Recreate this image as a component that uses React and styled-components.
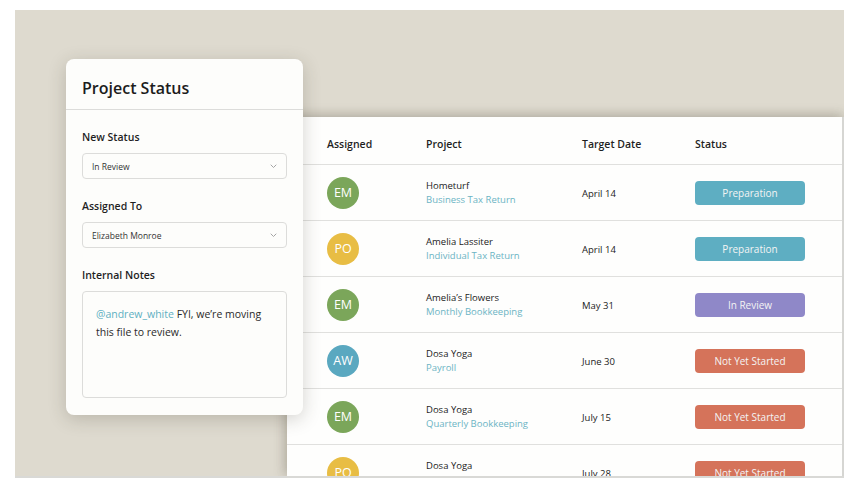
import React from "react";
import styled, { createGlobalStyle } from "styled-components";

const GlobalStyle = createGlobalStyle`
  body {
    margin: 0;
    background: #ffffff;
    font-family: "Open Sans", "Liberation Sans", sans-serif;
    color: #222;
  }
`;

const rows = [
  { initials: "EM", tone: "green", client: "Hometurf", project: "Business Tax Return", date: "April 14", status: "Preparation" },
  { initials: "PO", tone: "yellow", client: "Amelia Lassiter", project: "Individual Tax Return", date: "April 14", status: "Preparation" },
  { initials: "EM", tone: "green", client: "Amelia’s Flowers", project: "Monthly Bookkeeping", date: "May 31", status: "In Review" },
  { initials: "AW", tone: "blue", client: "Dosa Yoga", project: "Payroll", date: "June 30", status: "Not Yet Started" },
  { initials: "EM", tone: "green", client: "Dosa Yoga", project: "Quarterly Bookkeeping", date: "July 15", status: "Not Yet Started" },
  { initials: "PO", tone: "yellow", client: "Dosa Yoga", project: "Annual Report", date: "July 28", status: "Not Yet Started" },
];

const avatarColors = {
  green: "#7ba65a",
  yellow: "#e8bd44",
  blue: "#5aa8c0",
};

const badgeColors = {
  Preparation: "#5eaec2",
  "In Review": "#8f88c8",
  "Not Yet Started": "#d5735a",
};

// small grey caret used inside the selects
function Chevron() {
  return (
    <svg width="7" height="5" viewBox="0 0 7 5" fill="none">
      <path d="M1 1l2.5 2.5L6 1" stroke="#a5a5a5" strokeWidth="1" strokeLinecap="round" />
    </svg>
  );
}

export default function App() {
  return (
    <>
      <GlobalStyle />
      <Frame>
        <TablePanel>
          <HeaderRow>
            <HeadCell>Assigned</HeadCell>
            <HeadCell>Project</HeadCell>
            <HeadCell>Target Date</HeadCell>
            <HeadCell>Status</HeadCell>
          </HeaderRow>
          {rows.map((r, i) => (
            <Row key={i}>
              <Avatar $tone={r.tone}>{r.initials}</Avatar>
              <ProjectCell>
                <Client>{r.client}</Client>
                <SubLink>{r.project}</SubLink>
              </ProjectCell>
              <DateCell>{r.date}</DateCell>
              <Badge $status={r.status}>{r.status}</Badge>
            </Row>
          ))}
        </TablePanel>

        <Card>
          <CardTitle>Project Status</CardTitle>
          <CardBody>
            <Label>New Status</Label>
            <Select>
              In Review
              <Chevron />
            </Select>
            <Label>Assigned To</Label>
            <Select>
              Elizabeth Monroe
              <Chevron />
            </Select>
            <Label>Internal Notes</Label>
            <Notes>
              <Mention>@andrew_white</Mention> FYI, we’re moving this file to review.
            </Notes>
          </CardBody>
        </Card>
      </Frame>
    </>
  );
}

const Frame = styled.div`
  position: relative;
  margin: 10px 0 0 15px;
  width: 829px;
  height: 468px;
  background: #dedacf;
  padding: 107px 0 0 272px;
  box-sizing: border-box;
  overflow: hidden;
  border-bottom: 2px solid #d9d9d6;
`;

const TablePanel = styled.div`
  height: 100%;
  background: #fefefd;
  border-right: 2px solid #d6d6d3;
  box-shadow: 0 -3px 10px rgba(90, 85, 70, 0.22), -4px 0 10px rgba(90, 85, 70, 0.18);
  overflow: hidden;
`;

const grid = `
  display: grid;
  grid-template-columns: 99px 156px 113px 1fr;
  align-items: center;
  padding-left: 40px;
`;

const HeaderRow = styled.div`
  ${grid}
  height: 48px;
  padding-top: 6px;
  box-sizing: border-box;
  border-bottom: 1px solid #e0e0de;
`;

const HeadCell = styled.div`
  font-size: 10.5px;
  font-weight: 600;
  color: #1f1f1f;
`;

const Row = styled.div`
  ${grid}
  height: 56px;
  box-sizing: border-box;
  border-bottom: 1px solid #e0e0de;
`;

const Avatar = styled.div`
  width: 32px;
  height: 32px;
  border-radius: 50%;
  background: ${(p) => avatarColors[p.$tone]};
  color: #fff;
  display: flex;
  align-items: center;
  justify-content: center;
  font-size: 12.5px;
  font-weight: 400;
`;

const ProjectCell = styled.div`
  display: flex;
  flex-direction: column;
`;

const Client = styled.div`
  font-size: 9.5px;
  line-height: 14px;
  color: #222;
`;

const SubLink = styled.div`
  font-size: 9.5px;
  line-height: 14px;
  color: #6cb4c4;
`;

const DateCell = styled.div`
  font-size: 9.5px;
  color: #222;
  padding-top: 2px;
`;

const Badge = styled.div`
  width: 110px;
  height: 24px;
  border-radius: 4px;
  background: ${(p) => badgeColors[p.$status]};
  color: #f4f4f4;
  font-size: 10px;
  display: flex;
  align-items: center;
  justify-content: center;
`;

const Card = styled.div`
  position: absolute;
  left: 51px;
  top: 49px;
  width: 237px;
  height: 356px;
  background: #fdfdfb;
  border-radius: 8px;
  box-shadow: 0 4px 18px rgba(60, 55, 40, 0.22);
  display: flex;
  flex-direction: column;
`;

const CardTitle = styled.div`
  height: 51px;
  box-sizing: border-box;
  padding: 18px 16px 0;
  font-size: 16px;
  font-weight: 600;
  color: #1c1c1c;
  border-bottom: 1px solid #dcdcda;
`;

const CardBody = styled.div`
  padding: 19px 16px 0;
  display: flex;
  flex-direction: column;
`;

const Label = styled.div`
  font-size: 10.5px;
  font-weight: 600;
  line-height: 16px;
  color: #1f1f1f;
  margin-bottom: 8px;
`;

const Select = styled.div`
  height: 26px;
  box-sizing: border-box;
  border: 1px solid #dcdcda;
  border-radius: 4px;
  padding: 0 9px;
  display: flex;
  align-items: center;
  justify-content: space-between;
  font-size: 8.5px;
  color: #333;
  margin-bottom: 19px;
`;

const Notes = styled.div`
  height: 107px;
  box-sizing: border-box;
  border: 1px solid #dcdcda;
  border-radius: 4px;
  padding: 13px;
  font-size: 10.5px;
  line-height: 18px;
  color: #2a2a2a;
`;

const Mention = styled.span`
  color: #5eb0c2;
`;
